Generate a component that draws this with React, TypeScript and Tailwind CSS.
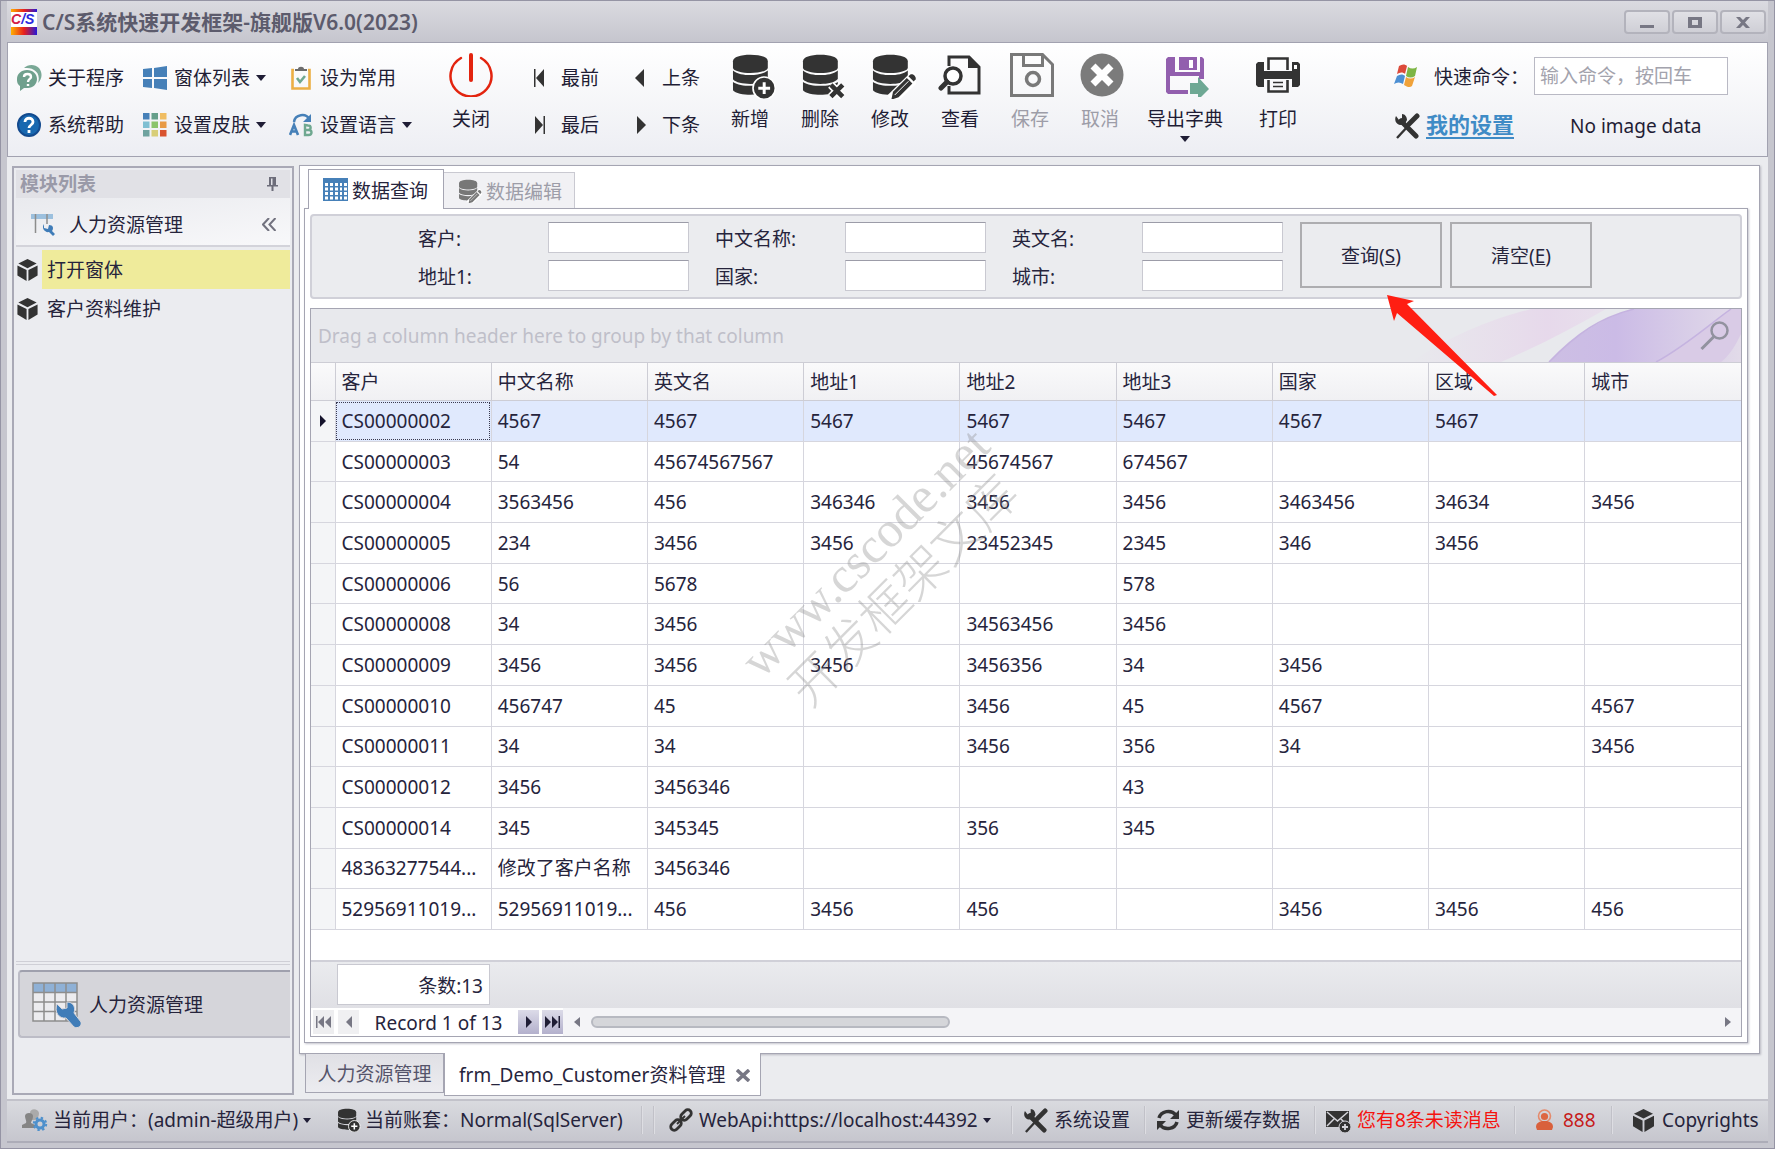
import React from 'react';

interface IconProps {
  className?: string;
}

const DatabaseIcon: React.FC<IconProps & { badge: 'plus' | 'x' | 'pencil' }> = ({ className, badge }) => (
  <svg className={className} viewBox="0 0 132 140" fill="currentColor">
    <path d="M2 25C2 12 25 5 55 5s53 7 53 20v20c0 10-28 16-53 16S2 55 2 45z" />
    <path d="M2 53c13 11 33 14 53 14s40-3 53-14v26c-10 11-30 15-53 15S10 90 2 80z" />
    <path d="M2 88c13 9 33 12 53 12s40-3 53-12v27c-10 8-33 12-53 12S8 122 2 113z" />
    {badge === 'plus' && (
      <>
        <circle cx="97" cy="107" r="34" stroke="#fff" strokeWidth="5" />
        <path d="M97 89v36M79 107h36" stroke="#fff" strokeWidth="9" />
      </>
    )}
    {badge === 'x' && (
      <>
        <path d="M87 97l36 36M123 97l-36 36" stroke="#fff" strokeWidth="24" />
        <path d="M87 97l36 36M123 97l-36 36" stroke="currentColor" strokeWidth="14" />
      </>
    )}
    {badge === 'pencil' && (
      <>
        <path d="M134 68L58 142" stroke="#fff" strokeWidth="36" />
        <path d="M105 76l17 17-42 42-22 7 5-24z" />
        <path d="M110 71l7-6c8-2 17 7 15 15l-6 7z" />
        <path d="M68 128l42-42" stroke="#fff" strokeWidth="3" />
      </>
    )}
  </svg>
);

const ToolsIcon: React.FC<IconProps> = ({ className }) => (
  <svg className={className} viewBox="0 0 26 26" fill="none" stroke="#333">
    <path d="M7 8l15 15" strokeWidth="5" strokeLinecap="round" />
    <path d="M2 3c-2 4 0 8 4 9 3 0 6-2 7-5 0-3-2-6-5-6v4l-3 2z" fill="#333" stroke="none" />
    <path d="M23 3l-8 8" strokeWidth="5" strokeLinecap="round" />
    <path d="M15 12L3 25" strokeWidth="2.4" />
  </svg>
);

const CubeIcon: React.FC<IconProps> = ({ className }) => (
  <svg className={className} viewBox="0 0 22 24" fill="#333">
    <path d="M11 0l10 5-10 5L1 5z" />
    <path d="M0 7l10 5v12L0 18z" />
    <path d="M22 7l-10 5v12l10-6z" />
  </svg>
);

const AboutIcon = () => (
  <svg className="size-[26px]" viewBox="0 0 26 26">
    <path d="M8 3c4-4 11-4 15 0 4 5 3 11-1 15 2-6 0-11-4-13-3-2-6-2-10-2z" fill="#7aa896" />
    <path d="M11 5c6 0 10 4 10 9s-4 9-9 9H8l-4 3v-5c-3-2-3-5-3-7 0-5 4-9 10-9z" fill="#6fa08d" />
    <path d="M8 12c0-4 7-4 7 0 0 2-3 2-3 5M12 19v2" fill="none" stroke="#fff" strokeWidth="2.4" />
  </svg>
);

const HelpIcon = () => (
  <svg className="size-6" viewBox="0 0 24 24">
    <circle cx="12" cy="12" r="11" fill="#1868b0" stroke="#134a8e" strokeWidth="2" />
    <path d="M8 9c0-5 8-5 8 0 0 3-4 3-4 6M12 17v3" fill="none" stroke="#fff" strokeWidth="2.8" />
  </svg>
);

const WindowsIcon = () => (
  <svg className="size-6" viewBox="0 0 24 24" fill="#4680b8">
    <path d="M0 3l9-1v9H0zM11 2l13-2v11H11zM0 13h9v9l-9-1zM11 13h13v11l-13-2z" />
  </svg>
);

const skinColors = ['#4680b8', '#659f8a', '#f0bd62', '#7fbfd2', '#8bc46c', '#e89a45', '#6fa39f', '#d8ce78', '#d9532f'];

const SkinIcon = () => (
  <svg className="size-6" viewBox="0 0 24 24">
    {skinColors.map((color, i) => (
      <rect key={i} x={(i % 3) * 8.5} y={Math.floor(i / 3) * 8.5} width="6.5" height="6.5" fill={color} />
    ))}
  </svg>
);

const ClipboardIcon = () => (
  <svg className="h-6 w-5" viewBox="0 0 20 24" fill="none">
    <path d="M3 4H1.5v18.5h17V4H17" stroke="#ecaf45" strokeWidth="2.6" />
    <path d="M4 5V3h3c0-3 6-3 6 0h3v2z" fill="#6c6c6c" />
    <path d="M6 12l3 4 5-6" stroke="#6fa890" strokeWidth="2.6" />
  </svg>
);

const LanguageIcon = () => (
  <svg className="size-6" viewBox="0 0 24 24">
    <path d="M5 9c1-8 12-9 15-3" fill="none" stroke="#4680b8" strokeWidth="2.5" />
    <path d="M22 1v8h-8z" fill="#4680b8" />
    <path d="M1 22l4-10 4 10M2.5 18.500h5" fill="none" stroke="#4680b8" strokeWidth="2.6" />
    <path d="M16 12v10h3.500c4 0 4-5 0-5H16h3c3.500 0 3.500-4.500 0-4.500z" fill="none" stroke="#6fa890" strokeWidth="2.4" />
  </svg>
);

const PowerIcon = () => (
  <svg className="size-11" viewBox="0 0 44 44" fill="none" stroke="#e3240f" strokeLinecap="round">
    <path d="M12 5a20.500 20.500 0 1 0 20 0" strokeWidth="2.5" />
    <path d="M22 2v25" strokeWidth="4" />
  </svg>
);

const ViewIcon = () => (
  <svg className="size-11" viewBox="0 0 44 44" fill="none" stroke="#333">
    <path d="M11 13V4h20l10 10v26H11v-7" strokeWidth="3" />
    <path d="M30 4l11 11H30z" fill="#333" stroke="none" />
    <circle cx="15" cy="23" r="8" strokeWidth="3.5" fill="#fff" />
    <path d="M9 29l-6 6" strokeWidth="5" strokeLinecap="round" />
  </svg>
);

const SaveIcon = () => (
  <svg className="ml-1 size-11" viewBox="0 0 44 44" fill="none" stroke="#797979" strokeWidth="3">
    <path d="M1.5 1.5h31l10 10v31h-41z" />
    <path d="M13.5 2v10.500h19V2" />
    <circle cx="23" cy="26" r="6.5" strokeWidth="3.5" />
  </svg>
);

const CancelIcon = () => (
  <svg className="ml-1 size-11" viewBox="0 0 44 44">
    <circle cx="22" cy="22" r="21.5" fill="#7b7b7b" />
    <path d="M13 13l18 18M31 13L13 31" stroke="#fff" strokeWidth="7" />
  </svg>
);

const ExportIcon = () => (
  <svg className="ml-1 size-11" viewBox="0 0 44 44">
    <path d="M3 4h7v15h25V4h2l2 2v20h-5v-3H5v14h18v4H3l-2-2V6z" fill="#925fae" />
    <path d="M14 4h18v13H14z" fill="#925fae" />
    <path d="M24 7h4v8h-4z" fill="#fff" />
    <path d="M25 30h8v-6l11 12-11 11v-6h-8z" fill="#6ea894" />
  </svg>
);

const PrintIcon = () => (
  <svg className="size-11" viewBox="0 0 44 44">
    <path d="M0 11l2-2h6v9h28V9h6l2 2v21l-2 2h-6v-8H8v8H2l-2-2z" fill="#333" />
    <path d="M12.5 17V5.500h19V17M12.5 27v11.500h19V27" fill="none" stroke="#333" strokeWidth="2.6" />
    <path d="M17 29.500h10M17 33.500h10" stroke="#333" strokeWidth="1.5" />
    <path d="M38 12h3v4h-3z" fill="#fff" />
  </svg>
);

const FlagIcon = () => (
  <svg className="size-6" viewBox="0 0 24 24">
    <path d="M5 2c3-2 6-2 8 0l-2 8c-2-2-5-2-8 0z" fill="#dc4a3a" />
    <path d="M14 3c3 2 6 2 9 0l-2 9c-3 2-6 2-9 0z" fill="#7db544" />
    <path d="M3 12c3-2 6-2 8 0l-2 8c-3-2-6-2-9 0z" fill="#4c8fd3" />
    <path d="M12 13c3 2 6 2 9 0l-3 9c-2 2-5 1-8-1z" fill="#f0a23a" />
  </svg>
);

const Caret: React.FC<IconProps> = ({ className }) => (
  <svg className={className} viewBox="0 0 10 6" fill="#1f1d35">
    <path d="M0 0h10L5 6z" />
  </svg>
);

interface MenuButtonProps {
  icon: React.ReactNode;
  label: string;
  caret?: boolean;
}

const MenuButton: React.FC<MenuButtonProps> = ({ icon, label, caret }) => (
  <button className="flex h-7 items-center whitespace-nowrap">
    <span className="mr-[6px] flex w-[26px] justify-center">{icon}</span>
    {label}
    {caret && <Caret className="ml-[6px] h-[6px] w-[10px]" />}
  </button>
);

const BigButton: React.FC<MenuButtonProps & { disabled?: boolean }> = ({ icon, label, caret, disabled }) => (
  <button disabled={disabled} className="flex min-w-[70px] flex-col items-center whitespace-nowrap disabled:text-[#9d9da8]">
    {icon}
    <span className="mt-2 leading-7">{label}</span>
    {caret && <Caret className="mt-[3px] h-[6px] w-[10px]" />}
  </button>
);

const NavButton: React.FC<{ label: string; path: string }> = ({ label, path }) => (
  <button className="flex h-7 items-center gap-4 whitespace-nowrap">
    <svg className="h-5 w-[11px]" viewBox="0 0 11 20" fill="#333">
      <path d={path} />
    </svg>
    {label}
  </button>
);

const SearchField: React.FC<{ id: string; label: string }> = ({ id, label }) => (
  <div className="flex items-center">
    <label htmlFor={id} className="w-[130px] whitespace-nowrap pt-[2px]">{label}</label>
    <input id={id} className="h-[31px] w-[141px] border border-[#c9c9d1] border-t-[#9c9ca8] bg-white px-1" />
  </div>
);

const Divider = () => <span className="h-7 w-[2px] shrink-0 bg-gradient-to-r from-[#b3b3bb] to-[#ececf0]" />;

const columns = ['客户', '中文名称', '英文名', '地址1', '地址2', '地址3', '国家', '区域', '城市'];

const rows = [
  ['CS00000002', '4567', '4567', '5467', '5467', '5467', '4567', '5467', ''],
  ['CS00000003', '54', '45674567567', '', '45674567', '674567', '', '', ''],
  ['CS00000004', '3563456', '456', '346346', '3456', '3456', '3463456', '34634', '3456'],
  ['CS00000005', '234', '3456', '3456', '23452345', '2345', '346', '3456', ''],
  ['CS00000006', '56', '5678', '', '', '578', '', '', ''],
  ['CS00000008', '34', '3456', '', '34563456', '3456', '', '', ''],
  ['CS00000009', '3456', '3456', '3456', '3456356', '34', '3456', '', ''],
  ['CS00000010', '456747', '45', '', '3456', '45', '4567', '', '4567'],
  ['CS00000011', '34', '34', '', '3456', '356', '34', '', '3456'],
  ['CS00000012', '3456', '3456346', '', '', '43', '', '', ''],
  ['CS00000014', '345', '345345', '', '356', '345', '', '', ''],
  ['48363277544...', '修改了客户名称', '3456346', '', '', '', '', '', ''],
  ['52956911019...', '52956911019...', '456', '3456', '456', '', '3456', '3456', '456'],
];

const TitleBar = () => (
  <header className="flex h-[41px] items-center bg-gradient-to-b from-[#dadae0] to-[#c6c6ce] pl-1 pr-[2px]">
    <svg className="size-[26px]" viewBox="0 0 26 26">
      <defs>
        <linearGradient id="logo">
          <stop offset="0" stopColor="#ffb000" />
          <stop offset="0.5" stopColor="#e8201c" />
          <stop offset="1" stopColor="#2419d8" />
        </linearGradient>
      </defs>
      <path fill="#fff" d="M0 0h26v26H0z" />
      <path fill="url(#logo)" d="M0 0h26v3H0zM0 18h26v8H0z" />
      <text x="0" y="15" fontFamily="Liberation Sans" fontSize="14" fontWeight="bold" fontStyle="italic" fill="#2b2be0">
        <tspan fill="#d42045">C</tspan>/S
      </text>
    </svg>
    <h1 className="ml-[5px] text-[21px] font-semibold text-[#5c5b6c]">C/S系统快速开发框架-旗舰版V6.0(2023)</h1>
    <div className="ml-auto flex gap-[2px]">
      {['M8 12h14v3H8z', 'M8 4h14v11H8zM12 7v5h6V7z', 'M8 4h4l3 3 3-3h4l-5 5.500 5 5.500h-4l-3-3-3 3H8l5-5.500z'].map((d, i) => (
        <button key={i} aria-label={['最小化', '最大化', '关闭窗口'][i]} className="flex h-6 w-[46px] items-center justify-center rounded border-2 border-[#b3b3bc] bg-gradient-to-b from-[#e0e0e5] to-[#cfcfd6]">
          <svg className="h-[18px] w-[30px]" viewBox="0 0 30 18" fill="#777784" fillRule="evenodd">
            <path d={d} />
          </svg>
        </button>
      ))}
    </div>
  </header>
);

const Ribbon = () => (
  <nav className="flex h-[115px] border border-[#a2a2b0] bg-gradient-to-b from-white to-[#edeef3] text-[#1f1d35]">
    <div className="grid grid-cols-[126px_146px_148px] content-start gap-y-[19px] pl-2 pt-[21px]">
      <MenuButton icon={<AboutIcon />} label="关于程序" />
      <MenuButton icon={<WindowsIcon />} label="窗体列表" caret />
      <MenuButton icon={<ClipboardIcon />} label="设为常用" />
      <MenuButton icon={<HelpIcon />} label="系统帮助" />
      <MenuButton icon={<SkinIcon />} label="设置皮肤" caret />
      <MenuButton icon={<LanguageIcon />} label="设置语言" caret />
    </div>
    <div className="pt-[10px]">
      <BigButton icon={<PowerIcon />} label="关闭" />
    </div>
    <div className="ml-7 grid grid-cols-[101px_80px] content-start gap-y-[19px] pt-[21px]">
      <NavButton label="最前" path="M0 1h1.500v18H0zM10 1v18L2 10z" />
      <NavButton label="上条" path="M9 1v18L0 10z" />
      <NavButton label="最后" path="M9.500 1H11v18H9.500zM1 1v18l8-9z" />
      <NavButton label="下条" path="M2 1v18l9-9z" />
    </div>
    <div className="flex pt-[10px]">
      <BigButton icon={<DatabaseIcon badge="plus" className="-mb-[2px] ml-2 h-[46px] w-11 text-[#333]" />} label="新增" />
      <BigButton icon={<DatabaseIcon badge="x" className="-mb-[2px] ml-2 h-[46px] w-11 text-[#333]" />} label="删除" />
      <BigButton icon={<DatabaseIcon badge="pencil" className="-mb-[2px] ml-2 h-[46px] w-11 text-[#333]" />} label="修改" />
      <BigButton icon={<ViewIcon />} label="查看" />
      <BigButton icon={<SaveIcon />} label="保存" disabled />
      <BigButton icon={<CancelIcon />} label="取消" disabled />
      <div className="pl-3 pr-5">
        <BigButton icon={<ExportIcon />} label="导出字典" caret />
      </div>
      <BigButton icon={<PrintIcon />} label="打印" />
    </div>
    <div className="ml-auto mr-[39px] flex flex-col gap-[17px] pt-[14px]">
      <div className="flex items-center">
        <FlagIcon />
        <label htmlFor="command" className="ml-4 w-[100px] whitespace-nowrap pt-[2px]">快速命令：</label>
        <input id="command" placeholder="输入命令，按回车" className="h-[38px] w-[194px] border border-[#b9b9c4] bg-white px-[5px] placeholder:text-[#a3a3ad]" />
      </div>
      <div className="flex items-center">
        <ToolsIcon className="size-[26px]" />
        <a href="#settings" className="ml-[6px] border-b-2 border-[#3f8bc6] text-[22px] font-bold leading-[25px] text-[#3f8bc6]">我的设置</a>
        <span className="ml-14">No image data</span>
      </div>
    </div>
  </nav>
);

const Sidebar = () => (
  <aside className="mb-1 mt-[9px] flex w-[282px] shrink-0 flex-col border-2 border-[#a9a9b6] bg-[#ebecf0] p-[2px]">
    <div className="flex h-7 items-center justify-between bg-[#e1e1e6] pl-1 pr-3 font-semibold text-[#9a9aa8]">
      模块列表
      <svg className="h-[14px] w-[11px]" viewBox="0 0 11 14" fill="#6d6d7a">
        <path d="M2 0h7v8h2v1.500H6.500V14h-2V9.500H0V8h2zM4 1.500V8h1.500V1.500z" />
      </svg>
    </div>
    <div className="flex h-[49px] items-center border-b-2 border-[#d3d3da] bg-gradient-to-br from-[#e9eaee] to-[#f8f8fa] pl-[15px] pr-[14px] pt-[6px]">
      <svg className="h-[22px] w-6" viewBox="0 0 24 22">
        <path d="M0 0h22v5H0z" fill="#9cc0de" />
        <path d="M4.500 0v19M16 0v10" stroke="#8d8d8d" strokeWidth="1.5" />
        <path d="M13 10v4l4 1 1-4c4 0 5 3 3 6l3 3-2 2-4-4c-4 1-8-4-5-8z" fill="#3f7cb8" />
      </svg>
      <span className="ml-[14px]">人力资源管理</span>
      <svg className="ml-auto h-[13px] w-[14px]" viewBox="0 0 14 13" fill="none" stroke="#72727f" strokeWidth="2">
        <path d="M7 0L1 6.500 7 13M13.500 0l-6 6.500 6 6.500" />
      </svg>
    </div>
    <ul className="mt-[3px]">
      <li className="flex h-[39px] items-center">
        <CubeIcon className="ml-[1px] mr-1 h-[22px] w-[21px]" />
        <a href="#open" className="flex h-full flex-1 items-center bg-[#efeb9b] pl-[5px]">打开窗体</a>
      </li>
      <li className="flex h-[39px] items-center">
        <CubeIcon className="ml-[1px] mr-1 h-[22px] w-[21px]" />
        <a href="#customer" className="flex h-full flex-1 items-center pl-[5px]">客户资料维护</a>
      </li>
    </ul>
    <div className="mt-auto h-1 border-y border-[#cfcfd6]" />
    <button className="mb-[53px] ml-[2px] mt-[5px] flex h-[68px] items-center rounded-l border-2 border-r-0 border-[#bcbcc6] border-t-[#9fa0ad] bg-[#d5d5da] pl-3 pt-[2px]">
      <svg className="h-[46px] w-[49px]" viewBox="0 0 49 46">
        <path d="M1 1h44v38H1z" fill="#ececef" />
        <path d="M1 1h44v10H1z" fill="#8fb1d6" />
        <path d="M1 1h44v38H1zM1 10.500h44M1 20h44M1 29.500h44M12 1v38M23 1v38M34 1v38" fill="none" stroke="#8d8d8d" strokeWidth="1.5" />
        <path d="M25 22l5 5 5-1v-6c6 0 9 5 7 11l7 9c1 4-3 7-7 5l-8-9c-7 1-12-6-9-14z" fill="#3f7cb8" stroke="#d5d5da" />
      </svg>
      <span className="ml-2">人力资源管理</span>
    </button>
  </aside>
);

const DataGrid = () => (
  <section className="relative mt-[9px] flex flex-1 flex-col border border-[#a5a5b2] bg-white">
    <div className="relative flex h-[53px] items-center justify-between overflow-hidden bg-[#e8e9ed] pl-[7px] pr-3 text-[#bfbfc9]">
      <svg className="absolute right-0 top-0 h-full w-[390px]" viewBox="0 0 390 53" preserveAspectRatio="none">
        <defs>
          <linearGradient id="pink">
            <stop offset="0" stopColor="#e8d4ea" stopOpacity="0" />
            <stop offset="0.7" stopColor="#e6d2ea" />
            <stop offset="1" stopColor="#e8dcec" />
          </linearGradient>
          <linearGradient id="violet">
            <stop offset="0" stopColor="#cdbfe4" />
            <stop offset="0.35" stopColor="#cbbbe6" />
            <stop offset="1" stopColor="#e2dbe9" />
          </linearGradient>
        </defs>
        <path d="M60 53C110 20 150 8 180 0h75c-35 20-70 38-105 53z" fill="url(#pink)" opacity="0.7" />
        <path d="M198 53C220 30 250 8 283 0h107v53z" fill="url(#violet)" />
        <path d="M305 53c28-15 50-35 75-53h10v25c-5 10-10 20-20 28z" fill="#d9cbe6" />
        <path d="M198 53C225 25 250 8 283 0M305 53c28-15 50-35 75-53" fill="none" stroke="#c5b3e0" strokeWidth="1.5" />
      </svg>
      <span>Drag a column header here to group by that column</span>
      <svg className="relative h-[30px] w-[29px]" viewBox="0 0 29 30" fill="none" stroke="#92929f">
        <circle cx="19.5" cy="9.5" r="8" strokeWidth="2.5" />
        <path d="M14 15.500L1.500 28" strokeWidth="3" />
      </svg>
    </div>
    <div className="relative">
      <table className="h-[568px] w-full table-fixed border-collapse text-left">
        <thead>
          <tr className="h-[38px] bg-gradient-to-b from-[#fafafb] to-[#f0f0f3]">
            <th className="w-6 border border-l-0 border-[#cdcdd5]" />
            {columns.map((column) => (
              <th key={column} className="border border-[#cdcdd5] px-[6px] font-normal last:border-r-0">{column}</th>
            ))}
          </tr>
        </thead>
        <tbody>
          {rows.map((row, rowIdx) => (
            <tr key={row[0]} className={rowIdx === 0 ? 'bg-[#e0e9fd]' : 'bg-white'}>
              <td className="border border-l-0 border-[#d6d6de] bg-[#f4f5f7] p-0">
                {rowIdx === 0 && (
                  <svg className="ml-[9px] h-3 w-[6px]" viewBox="0 0 6 12" fill="#15132c">
                    <path d="M0 0l6 6-6 6z" />
                  </svg>
                )}
              </td>
              {row.map((cell, idx) => (
                <td
                  key={idx}
                  className={
                    rowIdx === 0 && idx === 0
                      ? 'overflow-hidden whitespace-nowrap border border-[#d6d6de] px-[6px] outline-1 -outline-offset-2 outline-dotted outline-[#3a3a50]'
                      : 'overflow-hidden whitespace-nowrap border border-[#d6d6de] px-[6px] last:border-r-0'
                  }
                >
                  {cell}
                </td>
              ))}
            </tr>
          ))}
        </tbody>
      </table>
      <div className="pointer-events-none absolute left-[574px] top-[210px] flex size-0 items-center justify-center">
        <div className="-rotate-45 whitespace-nowrap text-center font-['Liberation_Serif','Noto_Sans_CJK_SC',serif] text-[50px] font-light leading-[55px] text-[#8a8a8a]/35">
          www.cscode.net
          <br />
          开发框架文库
        </div>
      </div>
    </div>
    <div className="min-h-[29px] flex-1" />
    <div className="h-12 border-t-2 border-[#d0d0d8] bg-gradient-to-b from-[#eaebee] to-[#e0e0e5] pl-[26px] pt-[2px]">
      <div className="flex h-[41px] w-[153px] items-center justify-end border border-[#c9c9d1] bg-white pr-[6px] pt-[2px]">条数:13</div>
    </div>
    <div className="flex h-7 items-center bg-[#f4f4f7]">
      <div className="flex h-full items-center bg-white pl-[2px]">
        <button aria-label="首条记录" className="flex h-6 w-[21px] items-center justify-center bg-[#eeeef0]">
          <svg className="h-3 w-[15px]" viewBox="0 0 15 12" fill="#777784"><path d="M0 0h1.500v12H0zM8 0v12L2 6zM15 0v12L9 6z" /></svg>
        </button>
        <button aria-label="上一条记录" className="ml-1 flex h-6 w-[21px] items-center justify-center bg-[#f0f0f2]">
          <svg className="h-3 w-[6px]" viewBox="0 0 6 12" fill="#777784"><path d="M6 0v12L0 6z" /></svg>
        </button>
        <span className="w-[159px] whitespace-nowrap pt-[2px] text-center">Record 1 of 13</span>
        <button aria-label="下一条记录" className="flex h-6 w-[21px] items-center justify-center bg-gradient-to-b from-[#dcdbe8] to-[#b3b0cc]">
          <svg className="h-3 w-[6px]" viewBox="0 0 6 12" fill="#1f1d35"><path d="M0 0v12l6-6z" /></svg>
        </button>
        <button aria-label="末条记录" className="ml-[3px] flex h-6 w-[21px] items-center justify-center bg-gradient-to-b from-[#dcdbe8] to-[#b3b0cc]">
          <svg className="h-3 w-[15px]" viewBox="0 0 15 12" fill="#1f1d35"><path d="M0 0v12l6-6zM7 0v12l6-6zM13.500 0H15v12h-1.500z" /></svg>
        </button>
      </div>
      <svg className="ml-[11px] h-[10px] w-[6px]" viewBox="0 0 6 10" fill="#777784"><path d="M6 0v10L0 5z" /></svg>
      <div className="mx-[11px] flex-1">
        <div className="h-3 w-[32%] rounded-full border-2 border-[#b7b9c1] bg-[#d5d6da]" />
      </div>
      <svg className="mr-[10px] h-[10px] w-[6px]" viewBox="0 0 6 10" fill="#777784"><path d="M0 0v10l6-5z" /></svg>
    </div>
  </section>
);

const Workspace = () => (
  <main className="flex min-w-0 flex-1 flex-col">
    <div className="mt-2 flex flex-1 flex-col border border-[#a5a5b2] bg-white pb-[10px] pl-1 pr-[11px] pt-[3px] shadow-[1px_1px_2px_#b9b9c2]">
      <div className="relative z-10 -mb-[1px] flex items-end pl-1">
        <button className="flex h-10 w-[136px] items-center gap-1 border border-b-0 border-[#a5a5b2] bg-white pl-[14px]">
          <svg className="h-[23px] w-[25px]" viewBox="0 0 25 23">
            <path d="M0 0h25v23H0z" fill="#4680b8" />
            <path d="M2 5h3v3H2zM7 5h3v3H7zM12 5h3v3h-3zM17 5h2v3h-2zM21 5h3v3h-3zM2 9.500h3v3H2zM7 9.500h3v3H7zM12 9.500h3v3h-3zM17 9.500h2v3h-2zM21 9.500h3v3h-3zM2 14h3v3H2zM7 14h3v3H7zM12 14h3v3h-3zM17 14h2v3h-2zM21 14h3v3h-3zM2 18.500h3v3H2zM7 18.500h3v3H7zM12 18.500h3v3h-3zM17 18.500h2v3h-2zM21 18.500h3v3h-3z" fill="#fff" />
          </svg>
          <span className="pt-[2px]">数据查询</span>
        </button>
        <button className="mb-[1px] flex h-9 w-[131px] items-center gap-1 border border-b-0 border-l-0 border-[#c9c9d1] bg-[#f1f1f4] pl-[14px] text-[#9d9da8]">
          <DatabaseIcon badge="pencil" className="size-6 text-[#777]" />
          <span className="pt-[2px]">数据编辑</span>
        </button>
      </div>
      <div className="relative flex flex-1 flex-col border border-[#a5a5b2] p-[5px] shadow-[1px_1px_2px_#c4c4cc]">
        <form className="flex h-[85px] gap-[17px] rounded border-2 border-[#d0d0d8] bg-[#ebecef] pl-[106px] pt-[6px]">
          <div className="grid grid-cols-3 content-start gap-x-[26px] gap-y-[7px]">
            <SearchField id="customer" label="客户:" />
            <SearchField id="cn-name" label="中文名称:" />
            <SearchField id="en-name" label="英文名:" />
            <SearchField id="address" label="地址1:" />
            <SearchField id="country" label="国家:" />
            <SearchField id="city" label="城市:" />
          </div>
          <div className="flex gap-2">
            <button type="button" className="h-[66px] w-[142px] border-2 border-[#adadb0] pt-[2px]">查询(<u>S</u>)</button>
            <button type="button" className="h-[66px] w-[142px] border-2 border-[#adadb0] pt-[2px]">清空(<u>E</u>)</button>
          </div>
        </form>
        <DataGrid />
        <svg className="pointer-events-none absolute left-[1082px] top-[86px] h-[101px] w-[111px]" viewBox="0 0 111 101" fill="#ff1e12">
          <path d="M0 0l27 6-7 3 90 91-3 1L10 18l-3 8z" />
        </svg>
      </div>
    </div>
    <div className="relative -mt-[1px] flex h-[46px] items-start pl-[6px]">
      <button className="h-10 w-[139px] border border-[#a5a5b2] bg-gradient-to-b from-[#e0e0e5] to-[#ececf0] pt-[2px] text-[#55546a]">人力资源管理</button>
      <button className="flex h-[43px] w-[317px] items-center justify-between whitespace-nowrap border border-t-0 border-[#a5a5b2] bg-white pl-[14px] pr-[10px] pt-[2px]">
        frm_Demo_Customer资料管理
        <svg className="h-[13px] w-[14px]" viewBox="0 0 14 13" stroke="#777784" strokeWidth="3.5"><path d="M1 1l12 11M13 1L1 12" /></svg>
      </button>
    </div>
  </main>
);

const StatusBar = () => (
  <footer className="flex h-11 items-center whitespace-nowrap border-b-2 border-t-2 border-b-[#adadb8] border-t-[#c2c2ca] bg-gradient-to-b from-[#d9dadf] to-[#c6c6ce] pb-[2px] pl-[15px]">
    <button className="flex w-[315px] items-center gap-[5px]">
      <svg className="h-[22px] w-[26px]" viewBox="0 0 26 22">
        <path d="M8 4c0-5 8-5 9 0 0 4-2 5-2 7H9c0-3-1-4-1-7z" fill="#aaa" />
        <path d="M3 7c0-4 8-4 8 0 0 4-2 5-2 7l4 2v3H0v-3l4-2C5 12 3 10 3 7z" fill="#858585" />
        <circle cx="18" cy="15" r="4" fill="none" stroke="#4e90cc" strokeWidth="3" />
        <circle cx="18" cy="15" r="6.2" fill="none" stroke="#4e90cc" strokeWidth="2" strokeDasharray="2.4 2.47" />
      </svg>
      当前用户：(admin-超级用户)
      <Caret className="h-[5px] w-2" />
    </button>
    <span className="flex w-[304px] items-center gap-1">
      <DatabaseIcon badge="plus" className="size-6 text-[#333]" />
      当前账套：Normal(SqlServer)
    </span>
    <span className="mr-[13px] flex gap-[10px]">
      <Divider />
      <Divider />
    </span>
    <button className="flex w-[343px] items-center gap-[5px]">
      <svg className="size-[26px]" viewBox="0 0 26 26" fill="none" stroke="#333" strokeWidth="2.8">
        <rect x="-6" y="-3.5" width="12" height="7" rx="3.5" transform="translate(8 18) rotate(-45)" />
        <rect x="-6" y="-3.5" width="12" height="7" rx="3.5" transform="translate(18 8) rotate(-45)" />
        <path d="M9 17l8-8" strokeWidth="2" />
      </svg>
      WebApi:https://localhost:44392
      <Caret className="h-[5px] w-2" />
    </button>
    <Divider />
    <button className="ml-[10px] flex w-[121px] items-center gap-[6px]">
      <ToolsIcon className="size-[25px]" />
      系统设置
    </button>
    <Divider />
    <button className="ml-[10px] flex w-[158px] items-center gap-[6px]">
      <svg className="size-6" viewBox="0 0 24 24" fill="none" stroke="#333" strokeWidth="3.5">
        <path d="M3 10c2-7 12-9 17-3M21 14c-2 7-12 9-17 3" />
        <path d="M23 2v9h-9zM1 22v-9h9z" fill="#333" stroke="none" />
      </svg>
      更新缓存数据
    </button>
    <Divider />
    <button className="ml-[10px] flex w-[188px] items-center gap-[6px] text-[#f5130f]">
      <svg className="size-[25px]" viewBox="0 0 25 25">
        <path d="M0 3h23v16H0z" fill="#333" />
        <path d="M1 4l10.500 9L22 4M1 18l8-8M22 18l-8-8" fill="none" stroke="#d4d4da" strokeWidth="1.5" />
        <circle cx="19" cy="19" r="6" fill="#333" stroke="#d4d4da" />
        <path d="M19 16v6M16 19h6" stroke="#d4d4da" strokeWidth="1.8" />
      </svg>
      您有8条未读消息
    </button>
    <Divider />
    <span className="ml-5 flex w-[75px] items-center gap-[10px] text-[#c61a1a]">
      <svg className="h-[22px] w-[17px]" viewBox="0 0 17 22">
        <circle cx="8.5" cy="7" r="6" fill="none" stroke="#e58a6c" strokeWidth="1.6" />
        <circle cx="8.5" cy="7.5" r="3.6" fill="#dd6743" />
        <path d="M0 18c0-4 3-5 6-6h5c3 1 6 2 6 6l-1 3H1z" fill="#d9603c" />
      </svg>
      888
    </span>
    <Divider />
    <span className="ml-5 flex items-center gap-2">
      <CubeIcon className="h-[23px] w-[21px]" />
      Copyrights
    </span>
  </footer>
);

const App: React.FC = () => {
  return (
    <div className="flex min-h-screen flex-col border border-[#9594a4] bg-[#c6c6ce] px-[6px] pb-[5px] font-['Noto_Sans','Noto_Sans_CJK_SC',sans-serif] text-[19px] leading-6 text-[#26243c]">
      <TitleBar />
      <Ribbon />
      <div className="flex flex-1 gap-[5px] bg-[#ebecef] pl-[5px] pr-2">
        <Sidebar />
        <Workspace />
      </div>
      <StatusBar />
    </div>
  );
};

export default App;
